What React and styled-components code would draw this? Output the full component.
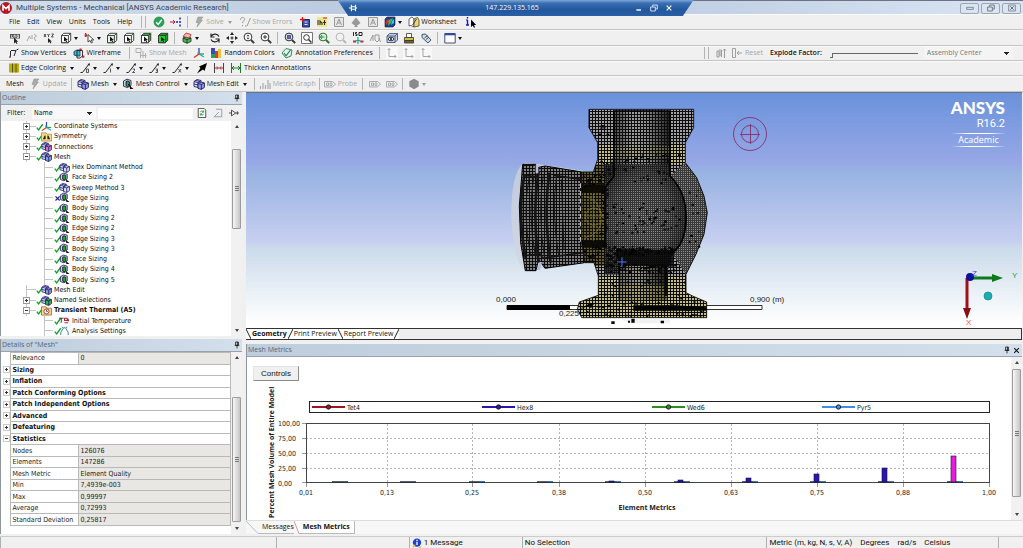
import React, { useState } from 'react';
import styled, { createGlobalStyle, css } from 'styled-components';

const uiFont = '"Open Sans", "Noto Sans", sans-serif';
const titleFont = '"Roboto", "Open Sans", sans-serif';
const treeFont = '"DejaVu Sans Condensed", "Roboto", sans-serif';

const GlobalStyle = createGlobalStyle`
  * {
    box-sizing: border-box;
  }

  body {
    margin: 0;
    overflow: hidden;
    background: #f0f0f0;
    color: #111;
    font: 7px/10px ${uiFont};
  }

  button,
  input,
  select {
    margin: 0;
    padding: 0;
    border: 0;
    background: none;
    color: inherit;
    font: inherit;
  }

  svg {
    display: block;
    flex: none;
  }
`;

/* ---------- icons ---------- */

const meshCubes = (fill) => (
  <g strokeWidth=".9">
    <path d="M1 3.5 4 1.5l4 1v5L5 9.5l-4-1z" fill="#dfe2ff" stroke="#23236e" />
    <path d="m1 3.5 4 1 3-2M5 4.5v5M1 6l4 1 3-2M3 2.5l4 1" stroke="#23236e" fill="none" />
    <path d="M5 5.5 8 4l3.4 1v4.4L8.4 11.4 5 10.4z" fill={fill} stroke="#20205e" />
    <path d="m5 5.5 3.4 1L11.4 5M8.4 6.5v4.9" stroke="#20205e" fill="none" />
  </g>
);

const sizingCube = (
  <g strokeWidth=".9">
    <path d="M1.5 3 5 1.2l4 1.3v5L5.4 9.6l-3.900-1.400z" fill="#cfd0f6" stroke="#20205e" />
    <path d="M4 3.6 5.600 3l1.800.8v3.700l-1.800 1-1.600-.8z" fill="#1fae2c" stroke="#111" />
    <path d="m7.500 7.500 4 3.500H8z" fill="#111" />
  </g>
);

const selectCube = (fill, front, pressed) => (
  <g>
    {pressed && <path d="M0 0h12v12H0z" fill="#fff" stroke="#999" strokeWidth=".5" />}
    <path d="M1.5 3.5 3.8 1.3h6.9v7l-2.300 2.400H1.500z" fill={fill} stroke="#333" strokeWidth=".9" />
    <path d="M1.500 3.500h6.900v7.200H1.500z" fill={front} stroke="#333" strokeWidth=".9" />
    <path d="m8.400 3.500 2.300-2.200" stroke="#333" strokeWidth=".9" />
    <path d="M4 4.500v5l1.300-1.100.9 1.800.9-.5-.8-1.700h1.600z" fill="#111" />
  </g>
);

const magnifier = (inner, line = '#333', glass = '#fff') => (
  <g>
    <circle cx="5" cy="5" r="3.9" fill={glass} stroke={line} />
    <path d="m8 8 3.200 3.200" stroke={line} strokeWidth="1.8" />
    {inner}
  </g>
);

const slash = (mark) => (
  <g>
    <path d="M.5 10.500h2L9 2" stroke="#222" fill="none" />
    <path d="m7.500 2 2.500-.8L9.500 4z" fill="#222" />
    <path d={mark} stroke="#333" strokeWidth=".8" fill="none" />
  </g>
);

const glyphs = {
  logo: (
    <g>
      <circle cx="6" cy="6" r="5.6" fill="#c4141c" stroke="#7c0c10" strokeWidth=".6" />
      <path d="M3 8.800V3.600l3 3 3-3v5.200" stroke="#fff" strokeWidth="1.6" fill="none" />
    </g>
  ),
  check: (
    <g>
      <circle cx="6" cy="6" r="5" fill="#2aa35a" stroke="#13733a" strokeWidth=".6" />
      <path d="m3.200 6.200 2 2.200 3.600-4.600" stroke="#fff" strokeWidth="1.5" fill="none" />
    </g>
  ),
  link: (
    <g>
      <path d="M0 6h4M3 4.200 5 6 3 7.800" stroke="#c0142a" fill="none" />
      <path d="M7 5v2M10 1.500v2M10 5v2M10 8.500v2" stroke="#2233cc" strokeWidth="1.600" />
    </g>
  ),
  bolt: <path d="M5 1h5L7.500 4h2L4 11l1.300-4.500H3z" fill="#aaa" stroke="#8d8d8d" strokeWidth=".5" />,
  help: <path d="M1.500 3.800c0-3 4-3 4-.4C5.500 5 3.500 5 3.500 7M3.500 9v1.300M6 10l1.500 0M8 10l3.500-8" stroke="#999" fill="none" />,
  addBlue: (
    <g>
      <path d="M3.500 3.500h7v7.500h-7z" fill="#3a4fa8" stroke="#1c2a66" />
      <path d="M1 3.500h5M3.500 1v5" stroke="#c81e1e" strokeWidth="1.300" />
      <path d="M5.500 6h3M5.500 8.500h3" stroke="#dfe6ff" />
    </g>
  ),
  addYellow: (
    <g>
      <path d="M1 1h10v10H1z" fill="#f2e68a" />
      <path d="M2 9V4M4 9V5l2 2v2M8.500 4v5M7 6.500h3" stroke="#333" fill="none" strokeWidth="1.100" />
      <path d="M7 2h4" stroke="#c22" />
    </g>
  ),
  pageGray: (
    <g stroke="#999" fill="none">
      <path d="M1.500 1.500h9v9h-9z" fill="#e8e8e8" />
      <path d="m3.500 9 2.500-6 2.500 6M4.500 7h3" />
    </g>
  ),
  spade: <path d="M6 1.500 10.500 7 8 9H6.800L8 11H4l1.200-2H4L1.500 7z" fill="#999" />,
  palette: (
    <g>
      <path d="M1 3 3 1h8v8l-2 2H1z" fill="#1b3e9e" stroke="#222" strokeWidth=".6" />
      <path d="M2 9V5l3-2v3z" fill="#e03030" />
      <path d="M4 10 5 4l4-2-2 5z" fill="#35c247" />
      <path d="m7 9 1-4 2-2v4z" fill="#38c9e8" />
    </g>
  ),
  worksheet: (
    <g strokeWidth=".8">
      <path d="M1 3 4 1l2 2v8L3 9.500 1 10z" fill="#fff" stroke="#444" />
      <path d="M6 3 9.500 1.500 11 4v6L6 11z" fill="#e9d86b" stroke="#444" />
      <path d="m4.500 9 4-6" stroke="#222" />
    </g>
  ),
  infoCursor: (
    <g>
      <path d="M2.500 1v1.500M2.500 4v5M1 9h3M1.300 4h1.200" stroke="#1515d0" strokeWidth="1.400" />
      <path d="M6 3.500v7.500l1.800-1.500 1.200 2.300 1-.6-1-2.200h2.200z" fill="#000" />
    </g>
  ),
  labelA: (
    <g>
      <path d="M1 2h10v4.500H1z" fill="#555" />
      <path d="M2.500 3.200v2.300h1.500M5 5.500V3.200h1.200v2.300M8 3.200h1.500v2.300H8z" stroke="#fff" strokeWidth=".7" fill="none" />
      <path d="M5 5.500v6l1.500-1.300 1 1.800 1-.5-1-1.800h1.700z" fill="#222" />
    </g>
  ),
  probeGray: <path d="m1 9 2.500-5 1 3M6 3v4M8 2l2.500 2L8 6l2 3" stroke="#a8a8a8" fill="none" />,
  coords: (
    <g stroke="#222" fill="none">
      <path d="m1 2 2 3M3 2 1 5M4.500 2l1 1.500L6.500 2M5.500 3.500V5M8.500 2h2l-2 3h2" strokeWidth=".8" />
      <path d="M5 6v5l1.400-1.200 1 1.800 1-.5-1-1.700h1.500z" fill="#222" stroke="none" />
    </g>
  ),
  pick: (
    <g>
      <path d="M1.500 1 3 4 1 4.500z" fill="#c22" stroke="#c22" />
      <path d="M4 2.500v7.500l2-1.600 1.300 2.600 1.200-.6-1.200-2.500h2.500z" fill="#fff" stroke="#333" strokeWidth=".9" />
    </g>
  ),
  selBody: selectCube('#fff', '#fff'),
  selVertex: selectCube('#dff3df', '#e3f6e3'),
  selEdge: selectCube('#e8f6e8', '#fff'),
  selFace: selectCube('#24b534', '#fff', true),
  selSolid: selectCube('#0d9a20', '#1fd636'),
  viewCube: (
    <g strokeWidth=".8">
      <path d="M2 6 6 4.500 10 6v3.500L6 11.300 2 9.500z" fill="#45c04f" stroke="#222" />
      <path d="M2 4.500 5 1l5 1.500L8.500 6z" fill="#f4b9b9" stroke="#a22" />
      <path d="m2 6 4 1.700L10 6M6 7.700v3.600" stroke="#222" fill="none" />
    </g>
  ),
  rotate: <path d="M10 4.500C8.500 1.500 4 1.500 2.500 4M2 1.500V5h3.500M2 7.500c1.500 3 6 3 7.500.5M10 10.500V7H6.500" stroke="#222" strokeWidth="1.200" fill="none" />,
  pan: <path d="M6 0 8 3H4zM6 12 4 9h4zM0 6l3-2v4zM12 6 9 8V4zM5.500 4.500h1v1h1v1h-1v1h-1v-1h-1v-1h1z" fill="#222" />,
  zoom: magnifier(<path d="M5 2.500 6.500 4.300h-3zM5 7.500 3.500 5.700h3z" fill="#333" />),
  zoomIn: magnifier(<path d="M3 5h4M5 3v4" stroke="#333" />),
  zoomFit: magnifier(<path d="M3.500 3.500h3v3h-3z" fill="#5a6ac0" stroke="#222" strokeWidth=".6" />, '#333', '#d8dcf8'),
  zoomBox: (
    <g>
      <path d="M.5.500h11v11H.5z" fill="#fff" stroke="#777" />
      <circle cx="5.500" cy="5.500" r="2.800" fill="none" stroke="#333" />
      <path d="m7.500 7.500 3 3" stroke="#333" strokeWidth="1.500" />
    </g>
  ),
  zoomPrev: magnifier(<path d="M2.500 5h4M4 3 2.500 5 4 7" stroke="#1a8a2a" fill="none" />, '#2b6b34', '#e0f4e0'),
  zoomNextGray: magnifier(null, '#b5b5b5', '#f3f3f3'),
  iso: (
    <g>
      <path d="M1.500 0v4M5 .5H3.500V2H5v1.500H3.500M7 .5h3v3H7z" stroke="#111" strokeWidth=".9" fill="none" />
      <path d="M6 5v3M2 10l4-2 4 2M6 8v4" stroke="#1da0a0" strokeWidth="1.200" fill="none" />
      <path d="M1 8.500h3v2H1zM8.500 8.500h3v2h-3z" fill="#c33" />
    </g>
  ),
  lookGray: <path d="m1 9 3-6v6M6 3h4v5L8 10 6 8zM10 6l1.500 4" stroke="#999" fill="none" />,
  eyeBox: (
    <g strokeWidth=".8">
      <path d="M1 4 3.500 1.500h8V8L9 10.500H1z" fill="#c7d3ea" stroke="#33456b" />
      <path d="M1 4h8v6.500M9 4l2.500-2.500" stroke="#33456b" fill="none" />
      <ellipse cx="5" cy="7" rx="2.800" ry="1.700" fill="#fff" stroke="#111" />
      <circle cx="5" cy="7" r="1" fill="#111" />
    </g>
  ),
  printer: (
    <g strokeWidth=".8">
      <path d="M3.500 1.500h5v4h-5z" fill="#fff" stroke="#333" />
      <path d="M1.500 5.500h9v3h-9z" fill="#cfc040" stroke="#333" />
      <path d="M1.500 8.500h9V11h-9z" fill="#6a6a2a" stroke="#333" />
    </g>
  ),
  tag: (
    <g strokeWidth=".9">
      <path d="M2 2.500 5.500 2l5.500 6-3 3-6-5.500z" fill="#c9dbe8" stroke="#345" />
      <path d="m4.500 6 3-2.500M6 7.500 9 5" stroke="#345" />
    </g>
  ),
  windowPane: (
    <g>
      <path d="M.8 1.500h10.400v9.500H.8z" fill="#fff" stroke="#3c4c80" />
      <path d="M.8 2.500h10.400" stroke="#2c4ca8" strokeWidth="1.600" />
    </g>
  ),
  vertices: <path d="M1 10h2M2.500 9.500V4M3 3.500h5L6 9M8.500 3l2-1" stroke="#222" fill="none" />,
  wireframe: (
    <g>
      <path d="M1 4.500 4 3h3v6H4L1 8z" fill="#3cb7c9" stroke="#135" strokeWidth=".8" />
      <path d="M6.500 1.500h2.300v2.300H6.500zM9 8.500h2.300v2.300H9z" fill="#c22c2c" />
      <path d="M4 3.500h5.500V9L7 11H4z" fill="none" stroke="#222" strokeWidth=".9" />
    </g>
  ),
  showMeshGray: <path d="M1 1.500h5v4H1zM5.500 6v5M8 4v7M10.500 6v5M5 8.500h6.500" stroke="#b0b0b0" fill="none" />,
  triad: (
    <g strokeWidth="1.300" fill="none">
      <path d="M6 7V1" stroke="#2a3ad0" />
      <path d="m6 7 5 3M4.500 5.500 6 7" stroke="#20b0c0" />
      <path d="m6 7-5 3.500" stroke="#d03030" />
      <path d="M6 7h5" stroke="#28a838" />
    </g>
  ),
  colors: (
    <g>
      <path d="M1 1h4v10H1z" fill="#3a48b8" />
      <path d="M5 4h3v7H5z" fill="#d83a3a" />
      <path d="M8 2h3v9H8z" fill="#e8c23a" />
      <path d="M1 7h4v4H1z" fill="#27a05a" />
    </g>
  ),
  annotate: (
    <g fill="none">
      <path d="m1 6 4-4.500L11 3l-1 6-5 2z" fill="#e2f2ea" stroke="#2d7a5a" strokeWidth=".9" />
      <path d="m3 6 2 2.800L9.500 3" stroke="#178a48" strokeWidth="1.200" />
    </g>
  ),
  axisGray: (
    <g>
      <path d="M0 0h12v12H0z" fill="#f8f8f8" />
      <path d="M3 1.500v8h7M8.500 8l1.500 1.500L8.500 11M1.500 3 3 1.500 4.500 3" stroke="#a5a5a5" fill="none" />
    </g>
  ),
  explodeGray: <path d="M2 4h2v6H2zM5 2v7M6.500 3v7M9.500 2v9M8 3.500 9.500 2 11 3.500" stroke="#999" fill="none" />,
  resetGray: <path d="M1.500 1.500h3v9h-3zM11 6H6M8 4 6 6l2 2" stroke="#a0a0a0" fill="none" />,
  edgeColor: (
    <g>
      <path d="M1 1.500h10v9H1z" fill="#b9ad16" />
      <path d="M4.500 1.500v9M8 1.500v9" stroke="#5d560a" />
    </g>
  ),
  edge0: slash('M6.500 7h2v3.500h-2z'),
  edge1: slash('M7.500 6.500v4'),
  edge2: slash('M6.500 7h2v1.500l-2 2h2.500'),
  edge3: slash('M6.500 7h2v3.500h-2M7 8.700h1.500'),
  edgeX: slash('m6.500 7 2.500 3.500M9 7l-2.500 3.500'),
  arrowBlack: <path d="M1 11.500 4.500 6 3 4.500 11 1 8.500 9 7 7.500z" fill="#000" />,
  thickRed: (
    <g fill="none">
      <path d="M1.500 1v10M10.500 1v10" stroke="#444" />
      <path d="M2 6h3M10 6H7M4 4.500 5.500 6 4 7.500M8 4.500 6.500 6 8 7.500" stroke="#b02222" />
    </g>
  ),
  thickGreen: <path d="M1.500 1v10M10.500 1v10M2 6h8M4 4 2 6l2 2M8 4l2 2-2 2" stroke="#1f7a2c" fill="none" />,
  mesh: meshCubes('#8f9be8'),
  meshPale: meshCubes('#dfe3ff'),
  meshPink: meshCubes('#d67ad6'),
  meshGreen: meshCubes('#32b944'),
  sizing: sizingCube,
  meshControl: (
    <g>
      {sizingCube}
      <path d="m6 6 3 3" stroke="#111" />
    </g>
  ),
  graphGray: <path d="M1.500 11V8M4 11V5M6.500 11V7M9 11V2M11 11V5" stroke="#aaa" strokeWidth="1.200" />,
  badgeGray: <path d="M.5 3.500h8l3 2.500-3 3h-8zM2.500 5h2v2.500h-2zM6 5h2v2.500H6z" stroke="#ababab" fill="none" />,
  sphereGray: <path d="m6 .8 4.700 2.500v5.200L6 11.200 1.300 8.500V3.300z" fill="#8b8b8b" />,
  symmetry: (
    <g>
      <path d="M.5 2h5l1 1.500h5V11H.5z" fill="#f6dc8a" stroke="#a58124" strokeWidth=".8" />
      <path d="m2 9 2-4h1v4zM10 9 8 5H7v4z" fill="#222" />
    </g>
  ),
  thermal: (
    <g>
      <path d="M.5 2h5l1 1.500h5V11H.5z" fill="#f6dc8a" stroke="#8a5a20" strokeWidth=".8" />
      <circle cx="6" cy="7" r="2.800" fill="#fff" stroke="#a03030" />
      <path d="M6 5v2h1.500" stroke="#222" strokeWidth=".8" fill="none" />
    </g>
  ),
  initTemp: (
    <g>
      <path d="M0 3.500h5M2.500 3.500v5" stroke="#333" fill="none" />
      <path d="M6 3.500h3v2.500H6zM6 8.500h4M10 4v3M11 6h-3" stroke="#b02848" fill="none" strokeWidth="1.200" />
    </g>
  ),
  settings: <path d="M2 11V8l3-5h2l3 5v3M3 2l1.500 1M9 2 7.500 3" stroke="#2a7c98" fill="none" />,
  refresh: (
    <g>
      <path d="M1.500.500h7l2 2v9h-9z" fill="#fff" stroke="#333" />
      <path d="M4 5c.5-2 3-2 4 0M8 2.800V5H6M8 7c-.5 2-3 2-4 0M4 9.200V7h2" stroke="#1d9a2c" fill="none" />
    </g>
  ),
  filterGray: <path d="M3.500 1.500h7v9h-9M1 11l6-6" stroke="#8a8fa8" fill="none" />,
  expand: <path d="M0 6h3M3 2.500v7L8 6zM8 6h4M10 4v4" stroke="#333" fill="none" />,
  pin: <path d="M4 1.500h4v5H4zM7 1.500v5M2.500 6.500h7M6 6.500V11" stroke="#111" strokeWidth="1.200" fill="none" />,
  close: <path d="m2 2 8 8M10 2l-8 8" stroke="#111" strokeWidth="1.800" />,
  pinSide: <path d="M1 6h3M4 2v8M4 4.500h5v3H4M9 2v8M9 6h2" stroke="#fff" strokeWidth="1.300" fill="none" />,
  minimize: <path d="M2 9h7" stroke="currentColor" strokeWidth="2" />,
  minBox: <path d="M1 5h10v3H1z" stroke="currentColor" fill="none" />,
  restore: <path d="M4 4V1.500h7v6H8.500M1 4.500h7v6H1z" stroke="currentColor" strokeWidth="1.200" fill="none" />,
  closeLight: <path d="m2.500 2.500 7 7M9.500 2.500l-7 7" stroke="currentColor" strokeWidth="1.800" />,
  closeBox: (
    <g fill="none" stroke="currentColor">
      <path d="M1 1.500h10v9H1z" />
      <path d="m3.500 3.500 5 5M8.500 3.500l-5 5" strokeWidth="1.400" />
    </g>
  ),
  info: (
    <g>
      <circle cx="6" cy="5.500" r="5" fill="#1c3fd0" />
      <path d="M6 2v1.500M6 4.500v4" stroke="#fff" strokeWidth="1.600" />
      <path d="m1 11 3-3M8 11h3" stroke="#e0b020" strokeWidth="1.500" />
    </g>
  ),
  done: <path d="m1 7.500 2.500 3L9 3" stroke="#12a022" strokeWidth="1.700" fill="none" />,
  failed: <path d="m2 4.500 5.500 5.500M7.500 4.500 2 10" stroke="#1a2090" strokeWidth="1.500" />,
};

const Icon = ({ name, size = 12 }) => (
  <svg width={size} height={size} viewBox="0 0 12 12" aria-hidden="true">{glyphs[name]}</svg>
);

/* ---------- shell ---------- */

const Shell = styled.div`
  position: relative;
  display: flex;
  flex-direction: column;
  height: 100vh;
`;

const TitleBar = styled.header`
  display: flex;
  align-items: center;
  height: 14px;
  padding: 1px 2px 0 0;
  gap: 4px;
  border-top: 1px solid #6c7482;
  background: linear-gradient(90deg, #d3dfec, #bccbe0 32%, #c3d1e6 70%, #d9e5f3);
  color: #3c4656;
`;

const AppTitle = styled.h1`
  flex: 1;
  margin: 0;
  font: 400 8px/10px ${titleFont};
`;

const WindowButton = styled.button`
  display: grid;
  place-items: center;
  width: 19px;
  height: 11px;
  margin-left: -2px;
  border: 1px solid #9aa7b8;
  border-radius: 2px;
  background: #dbe5f0;
  color: #59616d;
`;

const RemoteBar = styled.div`
  position: absolute;
  top: 0;
  left: 33%;
  display: flex;
  align-items: center;
  gap: 16px;
  width: 356px;
  height: 16px;
  padding: 0 19px 0 10px;
  background: linear-gradient(#7ea6d4, #3a6fb4 20%, #24579c 60%, #2a5fa6);
  clip-path: polygon(0 0, 100% 0, 97% 100%, 3% 100%);
  color: #f4f8ff;
`;

const RemoteAddress = styled.span`
  flex: 1;
  padding-left: 28px;
  text-align: center;
`;

const RemoteButton = styled.button`
  width: 10px;
  height: 10px;
  margin-right: -11px;

  &:first-child {
    width: 14px;
    margin: 0;
  }

  &:last-child {
    margin: 0;
  }
`;

const Toolbar = styled.div`
  display: flex;
  align-items: center;
  height: ${({ $tall }) => ($tall ? 16 : 15)}px;
  padding-left: ${({ $inset }) => $inset || 6}px;
  border-bottom: 1px solid #c4c4c4;
  box-shadow: inset 0 1px #fafafa;
  white-space: nowrap;
`;

const ToolButton = styled.button`
  display: flex;
  align-items: center;
  height: 13px;
  padding-right: ${({ $end }) => $end || 0}px;
  color: ${({ disabled }) => (disabled ? '#a6a6a6' : '#111')};
`;

const IconSlot = styled.span`
  display: grid;
  place-items: center;
  width: ${({ $narrow }) => ($narrow ? 15 : 17)}px;
`;

const Caret = styled.span`
  width: 0;
  height: 0;
  margin: 1px ${({ $tight }) => ($tight ? 2 : 4)}px 0 ${({ $gap }) => $gap || 0}px;
  border: 2px solid transparent;
  border-top: 3px solid ${({ $muted }) => ($muted ? '#999' : '#111')};
  border-bottom: 0;
`;

const MenuButton = styled.button`
  padding: 0 3px 0 4px;
`;

const Divider = styled.span`
  width: 1px;
  height: 12px;
  margin: 0 ${({ $space }) => $space || 4}px;
  background: #b4b4b4;
`;

const Grip = styled.span`
  width: 5px;
  height: 12px;
  margin: 0 4px 0 ${({ $before }) => $before || 0}px;
  border: solid #b4b4b4;
  border-width: 0 1px;
`;

const Spacer = styled.span`
  flex: 1;
`;

const Explode = styled.div`
  display: flex;
  align-items: center;
  width: 319px;
`;

const ExplodeLabel = styled.label`
  margin: 0 8px 0 7px;
  font-weight: 600;
`;

const ExplodeRange = styled.input`
  width: 88px;
  height: 12px;
  appearance: none;

  &::-webkit-slider-runnable-track {
    height: 1px;
    background: #666;
  }

  &::-webkit-slider-thumb {
    width: 3px;
    height: 5px;
    border: solid #666;
    border-width: 0 1px 1px 0;
    background: #f0f0f0;
    appearance: none;
  }
`;

const arrowSelect = css`
  appearance: none;
  background-image: linear-gradient(#222, #222), linear-gradient(#222, #222), linear-gradient(#222, #222);
  background-position: right 4px top 5px, right 5px top 6px, right 6px top 7px;
  background-repeat: no-repeat;
  background-size: 5px 1px, 3px 1px, 1px 1px;
`;

const AssemblySelect = styled.select`
  ${arrowSelect}
  flex: 1;
  height: 12px;
  margin: 0 10px 0 6px;
  padding: 0 3px;
  background-color: #f4f4f4;
  color: #777;
`;

/* ---------- panels ---------- */

const Main = styled.main`
  display: flex;
  flex: 1;
  gap: 4px;
  min-height: 0;
  padding-right: 1px;
`;

const SideColumn = styled.div`
  display: flex;
  flex: none;
  flex-direction: column;
  gap: 3px;
  width: 242px;
`;

const WorkColumn = styled.div`
  display: flex;
  flex: 1;
  flex-direction: column;
  min-width: 0;
`;

const Panel = styled.section`
  display: flex;
  flex: ${({ $grow }) => ($grow ? '1 1 0' : 'none')};
  flex-direction: column;
  min-height: 0;
  border: solid #8f959c;
  border-width: 0 0 0 1px;
  background: #fff;
`;

const PanelHeader = styled.div`
  display: flex;
  align-items: center;
  gap: 2px;
  height: 13px;
  padding: 0 1px;
  border-bottom: 1px solid #98a2ae;
  background: linear-gradient(90deg, #becddc, #d3dfeb);
`;

const PanelTitle = styled.h2`
  flex: 1;
  margin: 0;
  color: #54657c;
  font-size: 7px;
  font-weight: 400;
`;

const PanelButton = styled.button`
  width: 8px;
  height: 8px;
`;

const PanelBody = styled.div`
  display: flex;
  flex: 1;
  min-height: 0;
`;

const FilterRow = styled.div`
  display: flex;
  align-items: center;
  height: 16px;
  padding-left: 2px;
  border-left: 2px solid #f0f0f0;
  background: #f0f0f0;
`;

const FilterLabel = styled.label`
  width: 27px;
  padding-left: 2px;
`;

const FilterSelect = styled.select`
  ${arrowSelect}
  width: 64px;
  height: 12px;
  padding-left: 2px;
  background-color: #f8f8f8;
  font: 7px/12px ${treeFont};
`;

const FilterInput = styled.input`
  flex: 1;
  min-width: 0;
  height: 11px;
  margin: 0 1px 0 2px;
  background: #fff;
`;

const FilterButton = styled.button`
  display: grid;
  place-items: center;
  width: 16px;
`;

const ScrollBar = styled.div`
  display: flex;
  flex: none;
  flex-direction: column;
  align-items: stretch;
  width: 11px;
  background: #f1f1f1;
`;

const ScrollArrow = styled.button`
  display: grid;
  place-items: center;
  height: 11px;

  &::after {
    content: '';
    border: 2px solid transparent;
    ${({ $down }) => ($down ? 'border-top: 3px solid #444; border-bottom: 0;' : 'border-bottom: 3px solid #444; border-top: 0;')}
  }
`;

const ScrollGap = styled.span`
  flex: ${({ $share }) => $share} 0 0;
`;

const ScrollThumb = styled.div`
  display: grid;
  flex: ${({ $share }) => $share} 0 0;
  place-items: center;
  margin: 0 1px;
  border: 1px solid #9b9b9b;
  border-radius: 1px;
  background: linear-gradient(90deg, #f7f7f7, #dedede 50%, #c6c6c6);

  &::after {
    content: '';
    width: 4px;
    height: 5px;
    background: repeating-linear-gradient(#777 0 1px, transparent 1px 2px);
  }
`;

const Scroll = ({ before, thumb, after }) => (
  <ScrollBar>
    <ScrollArrow aria-label="Scroll up" />
    <ScrollGap $share={before} />
    <ScrollThumb $share={thumb} />
    <ScrollGap $share={after} />
    <ScrollArrow $down aria-label="Scroll down" />
  </ScrollBar>
);

/* ---------- outline tree ---------- */

const Tree = styled.ul`
  display: grid;
  flex: 1;
  grid-auto-rows: 1fr;
  margin: 0;
  padding: 0;
  overflow: hidden;
  font: 7px/10px ${treeFont};
  list-style: none;
`;

const TreeItem = styled.li`
  display: flex;
  align-items: center;
  min-height: 0;
  padding-left: ${({ $level }) => ($level ? 43 : 25)}px;
  background: ${({ $level }) => ($level
    ? 'linear-gradient(#c4c4c4, #c4c4c4) 43px 0 / 1px 100% no-repeat, linear-gradient(#c4c4c4, #c4c4c4) 43px 50% / 9px 1px no-repeat'
    : 'linear-gradient(#c4c4c4, #c4c4c4) 25px 0 / 1px 100% no-repeat, linear-gradient(#c4c4c4, #c4c4c4) 25px 50% / 10px 1px no-repeat')};
  font-weight: ${({ $bold }) => ($bold ? 700 : 400)};
  white-space: nowrap;
`;

const Toggle = styled.button`
  flex: none;
  width: 5px;
  height: 5px;
  margin: 0 7px 0 -2px;
  background: linear-gradient(#333, #333) center / 3px 1px no-repeat,
    ${({ $open }) => ($open ? '' : 'linear-gradient(#333, #333) center / 1px 3px no-repeat,')}
    linear-gradient(#fff, #fff);
  outline: 1px solid #9a9a9a;
`;

const ToggleGap = styled.span`
  width: 10px;
`;

const TreeIcons = styled.span`
  display: flex;
  align-items: center;
  margin-right: 2px;

  svg + svg {
    margin-left: -4px;
  }
`;

const outline = [
  { label: 'Coordinate Systems', icon: 'triad', open: false },
  { label: 'Symmetry', icon: 'symmetry', open: false },
  { label: 'Connections', icon: 'meshPink', open: false },
  { label: 'Mesh', icon: 'mesh', open: true },
  { label: 'Hex Dominant Method', icon: 'meshPale', level: 1 },
  { label: 'Face Sizing 2', icon: 'sizing', level: 1 },
  { label: 'Sweep Method 3', icon: 'meshPale', level: 1 },
  { label: 'Edge Sizing', icon: 'sizing', level: 1, status: 'failed' },
  { label: 'Body Sizing', icon: 'sizing', level: 1 },
  { label: 'Body Sizing 2', icon: 'sizing', level: 1 },
  { label: 'Edge Sizing 2', icon: 'sizing', level: 1 },
  { label: 'Edge Sizing 3', icon: 'sizing', level: 1 },
  { label: 'Body Sizing 3', icon: 'sizing', level: 1 },
  { label: 'Face Sizing', icon: 'sizing', level: 1 },
  { label: 'Body Sizing 4', icon: 'sizing', level: 1 },
  { label: 'Body Sizing 5', icon: 'sizing', level: 1 },
  { label: 'Mesh Edit', icon: 'mesh' },
  { label: 'Named Selections', icon: 'meshGreen', open: false },
  { label: 'Transient Thermal (A5)', icon: 'thermal', open: true, bold: true },
  { label: 'Initial Temperature', icon: 'initTemp', level: 1 },
  { label: 'Analysis Settings', icon: 'settings', level: 1 },
];

/* ---------- details ---------- */

const DetailsPanel = styled(Panel)`
  height: 195px;
`;

const DetailsTable = styled.table`
  flex: 1;
  height: 174px;
  border-collapse: collapse;
  font: 7px/8px ${treeFont};
  table-layout: fixed;
`;

const DetailsCell = styled.td`
  padding: 0 2px;
  border: 1px solid #b9b9b9;
  background: ${({ $filled }) => ($filled ? '#e8e7e3' : '#fff')};
  color: #222;
`;

const GroupCell = styled.th`
  padding: 0 2px;
  border: 1px solid #b9b9b9;
  font-weight: 700;
  text-align: left;
`;

const GutterCell = styled.td`
  padding: 0 0 0 3px;

  ${Toggle} {
    display: block;
    margin: 0;
    outline-color: #ccc;
  }
`;

const details = [
  { name: 'Relevance', value: '0' },
  { group: 'Sizing' },
  { group: 'Inflation' },
  { group: 'Patch Conforming Options' },
  { group: 'Patch Independent Options' },
  { group: 'Advanced' },
  { group: 'Defeaturing' },
  { group: 'Statistics', open: true },
  { name: 'Nodes', value: '126076' },
  { name: 'Elements', value: '147286' },
  { name: 'Mesh Metric', value: 'Element Quality' },
  { name: 'Min', value: '7,4939e-003' },
  { name: 'Max', value: '0,99997' },
  { name: 'Average', value: '0,72993' },
  { name: 'Standard Deviation', value: '0,25817' },
];

/* ---------- viewport ---------- */

const Viewport = styled.section`
  position: relative;
  display: flex;
  flex: 1;
  justify-content: center;
  align-items: flex-end;
  min-height: 0;
  border-top: 1px solid #6d7480;
  background: linear-gradient(#6a92dc, #98a8e6 30%, #97b2e2 33%, #c6cff0 63%, #cbdbea 66%, #fff 98%);
`;

const Brand = styled.div`
  position: absolute;
  top: 5px;
  right: 17px;
  display: flex;
  flex-direction: column;
  align-items: flex-end;
  color: #fff;
  font-size: 11px;
  line-height: 12px;
`;

const BrandName = styled.strong`
  font: 900 17px/20px "Lato", ${uiFont};
`;

const BrandRelease = styled.span`
  font: 11px/12px ${titleFont};
`;

const BrandEdition = styled.span`
  width: 53px;
  margin-top: 3px;
  border: solid transparent;
  border-width: 1px 0;
  border-image: linear-gradient(90deg, transparent, #fff 30%, #fff 70%, transparent) 1;
  font-size: 9px;
  text-align: center;
`;

const Target = styled.svg`
  position: absolute;
  top: 23px;
  right: 254px;
`;

const Triad = styled.svg`
  position: absolute;
  right: 0;
  bottom: 0;
`;

// repeatable scatter for the stray element specks
const scatter = (count, x, y, w, h, seed) => {
  let s = seed * 7919;
  const next = () => {
    s = (s * 16807) % 2147483647;
    return s / 2147483647;
  };
  return Array.from({ length: count }, () => [x + next() * w, y + next() * h, 3 + next() * 6, 3 + next() * 4]);
};

const specks = [
  ...scatter(26, 328, 170, 250, 30, 11),
  ...scatter(20, 350, 210, 190, 50, 23),
  ...scatter(56, 365, 320, 200, 90, 37),
  ...scatter(50, 345, 450, 40, 60, 41),
  ...scatter(90, 375, 450, 175, 26, 53),
  ...scatter(50, 355, 500, 210, 28, 59),
  ...scatter(20, 335, 545, 250, 60, 67),
  ...scatter(50, 275, 615, 365, 45, 71),
  ...scatter(12, 595, 250, 30, 220, 83),
  ...scatter(36, 330, 195, 20, 260, 97),
  ...scatter(26, 278, 232, 55, 40, 101),
  ...scatter(26, 278, 450, 50, 45, 103),
  ...scatter(8, 325, 85, 25, 30, 107),
];

const outerBody = 'M297 40H611V95L586 140V200L620 245L642 300L652 350L642 415L618 475L588 535V590L612 602L650 618V665H275L262 640L268 618L325 598V540L312 500H285L275 440V228H310L323 190V140L297 95Z';
const sideBody = 'M98 205H137V216L165 210L275 228L284 500L165 517L146 490L138 524H106L92 440L88 330Z';
const rightShell = 'M586 200L655 250V480L588 535L545 470L585 400L590 340L540 240Z';
const ballShape = 'M345 205H540V240Q590 290 590 365T545 480L530 535H345Z';

const ModelSvg = styled.svg`
  overflow: visible;
`;

const Model = () => (
  <ModelSvg width="290" height="235" viewBox="0 0 290 235" role="img" aria-label="Valve mesh">
    <defs>
      <pattern id="coarse" width="9" height="9" patternUnits="userSpaceOnUse">
        <path d="M0 0H9V3H3V9H0Z" fill="#0c0c0c" />
      </pattern>
      <pattern id="fine" width="6" height="6" patternUnits="userSpaceOnUse">
        <path d="M0 0H6V3H3V6H0Z" fill="#000" opacity=".62" />
      </pattern>
      <linearGradient id="bore">
        <stop offset="0" stopColor="#4a4a4a" />
        <stop offset=".35" stopColor="#a2a2a2" />
        <stop offset=".6" stopColor="#8a8a8a" />
        <stop offset="1" stopColor="#222" />
      </linearGradient>
      <radialGradient id="ball" cx=".45" cy=".5" r=".6">
        <stop offset="0" stopColor="#9c9c9c" />
        <stop offset=".6" stopColor="#7c7c7c" />
        <stop offset="1" stopColor="#383838" />
      </radialGradient>
      <linearGradient id="neck">
        <stop offset="0" stopColor="#6a6a62" />
        <stop offset=".4" stopColor="#98988c" />
        <stop offset="1" stopColor="#1e1e1a" />
      </linearGradient>
      <clipPath id="bodyClip"><path d={outerBody} /></clipPath>
    </defs>

    <g fontFamily="Liberation Sans, sans-serif" fontSize="8" fill="#222">
      <text x="7" y="209">0,000</text>
      <text x="70" y="223">0,225</text>
      <text x="261" y="209">0,900 (m)</text>
    </g>
    <path d="M18 212.500h255v4H18z" fill="#fff" stroke="#333" />
    <path d="M18 212h63v5H18z" fill="#000" />

    <g transform="translate(1 3) scale(.333333)">
      <path d="M110 200C80 200 64 270 64 350S80 510 105 524L280 500V224L150 205Z" fill="#d3d5dc" opacity=".7" />
      <path d={sideBody} fill="#808080" />
      <path d={sideBody} fill="url(#coarse)" stroke="#000" strokeWidth="3" />
      <g fill="none" stroke="#151515">
        <path d="M104 235Q80 350 108 490M146 225Q126 350 146 500M178 230Q160 350 182 500" strokeWidth="8" />
        <path d="M118 240Q96 350 122 480M132 240Q112 350 136 480M160 235Q142 350 164 490M200 235Q184 350 206 480M214 250L222 460" strokeWidth="3" />
        <path d="M98 238L140 242L146 218M190 238L275 250M112 478L150 474L158 486L282 470" strokeWidth="5" />
      </g>
      <path d="M137 206V232H145V214M140 522L150 498H156L150 522Z" fill="#b4bade" />
      <path d="M272 262V440" stroke="#ddd" strokeWidth="3" strokeDasharray="14 9" />

      <path d={outerBody} fill="#a2a2a4" />
      <g clipPath="url(#bodyClip)">
        <path d="M320 148H590V205H320zM262 540H652V668H262z" fill="#c6be84" />
        <path d="M270 205H345V510H270z" fill="#6a602c" />
        <path d={outerBody} fill="url(#coarse)" />
        <path d={rightShell} fill="#929297" />
        <path d={rightShell} fill="url(#fine)" />
        <path d="M275 265H345V290H275zM275 435H345V455H275z" fill="#0c0b05" />
      </g>
      <g fill="none" stroke="#a89838" strokeWidth="2" opacity=".7">
        <path d="M282 360H342M310 295V435" />
        <circle cx="312" cy="362" r="26" />
        <path d="M282 300Q330 310 334 362T284 425" />
      </g>

      <path d="M372 45H540V210H372z" fill="url(#bore)" />
      <path d="M372 150H540V185H372z" fill="#b5ae50" opacity=".35" />
      <path d="M372 45H540V210H372z" fill="url(#coarse)" />
      <path d={ballShape} fill="url(#ball)" />
      <path d={ballShape} fill="url(#fine)" />
      <path d="M372 45V240L345 275V455M540 45V240Q590 290 588 368T545 470M372 45H540" fill="none" stroke="#000" strokeWidth="5" />
      <path d="M378 458L552 462L548 512L388 516Z" fill="#050505" opacity=".82" />
      <path d="M388 510H530V612H388z" fill="url(#neck)" />
      <path d="M388 570H530V625H388z" fill="#b8ac50" opacity=".5" />
      <path d="M388 510H530V625H388z" fill="url(#coarse)" />
      <path d="M388 510V612M528 510V600" stroke="#000" strokeWidth="5" />
      <path d="M430 628H555L650 634V644H430zM268 640L300 622H320M300 660H400" fill="#000" />
      <path d={outerBody} fill="none" stroke="#000" strokeWidth="2.500" />
      <path d="M390 668H540V682H420Z" fill="#eee" opacity=".8" />
      <g fill="#060606">
        {specks.map(([x, y, w, h], i) => <rect key={i} x={x} y={y} width={w} height={h} />)}
        <path d="M364 676h10v8h-10zM512 674h10v8h-10zM414 674h6v6h-6zM424 668h10v12h-10z" />
      </g>
      <path d="M396 484V512M384 498H410" stroke="#4a78f0" strokeWidth="3" />
    </g>
  </ModelSvg>
);

const ViewTabs = styled.div`
  display: flex;
  flex: none;
  height: 12px;
  border: 1px solid #333;
  border-left: 0;
  background: #eee;
`;

const ViewTab = styled.button`
  padding: 0 1px;
  background: #fff;
  color: #111;
  font-weight: ${({ $active }) => ($active ? 700 : 400)};
`;

const Slant = ({ back }) => (
  <svg width="5" height="10" viewBox="0 0 5 10">
    <path d="M0 0h5v10H0z" fill="#fff" />
    <path d={back ? 'M0 0 5 10' : 'M5 0 0 10'} stroke="#222" />
  </svg>
);

/* ---------- metrics ---------- */

const MetricsPanel = styled(Panel)`
  height: 176px;
  margin-top: 4px;
`;

const MetricsContent = styled.div`
  flex: 1;
  min-width: 0;
  padding-top: 9px;
  overflow: hidden;
`;

const ControlsButton = styled.button`
  display: block;
  width: 46px;
  height: 15px;
  margin-left: 6px;
  border: 1px solid #e4e4e4;
  border-right-color: #8c8c8c;
  border-bottom-color: #8c8c8c;
  background: #f0f0f0;
  font: 8px/12px "Liberation Sans", sans-serif;
`;

const ChartSvg = styled.svg`
  width: 100%;
  height: auto;
  overflow: visible;
  font: 7px ${treeFont};
  fill: #222;
`;

const ChartTitle = styled.text`
  font: 700 7px ${uiFont};
`;

const series = [
  { name: 'Tet4', color: '#a01420' },
  { name: 'Hex8', color: '#2a14b4' },
  { name: 'Wed6', color: '#2c9018' },
  { name: 'Pyr5', color: '#3a8ee8' },
];

const xTicks = ['0,01', '0,13', '0,25', '0,38', '0,50', '0,63', '0,75', '0,88', '1,00'];
const tickX = [59, 140, 225, 312, 398, 484, 570, 656, 742];
const yTicks = ['100,00', '75,00', '50,00', '25,00', '0,00'];
const bars = [0, 0, 0, 0, 1, 2, 4, 8, 14, 26];

const Chart = () => (
  <ChartSvg viewBox="0 0 764 138" role="img" aria-label="Mesh Metrics">
    <ChartTitle transform="translate(27 137) rotate(-90)">Percent Mesh Volume of Entire Model</ChartTitle>
    <rect x="62.500" y="20.500" width="680" height="11" fill="#fff" stroke="#222" />
    {series.map(({ name, color }, i) => (
      <g key={name} transform={`translate(${65 + i * 170} 26)`}>
        <path d="M0 0H33" stroke={color} strokeWidth="2" />
        <circle cx="16.500" r="2.200" fill={color} stroke="#111" strokeWidth=".8" />
        <text x="35" y="3">{name}</text>
      </g>
    ))}
    <g stroke="#b5b5b5" strokeDasharray="2 2">
      {[57, 72, 87].map((y) => <path key={y} d={`M59 ${y}.5H742`} />)}
      {tickX.slice(1, -1).map((x) => <path key={x} d={`M${x}.5 43V102`} />)}
    </g>
    <g stroke="#999">
      {[42, 57, 72, 87, 101].map((y) => <path key={y} d={`M55 ${y}.5h4`} />)}
      {tickX.map((x) => <path key={x} d={`M${x}.5 102v4`} />)}
    </g>
    <rect x="59.500" y="42.500" width="683" height="59" fill="none" stroke="#444" />
    {yTicks.map((label, i) => <text key={label} x="31" y={45 + i * 15}>{label}</text>)}
    {xTicks.map((label, i) => <text key={label} x={tickX[i]} y="114" textAnchor="middle">{label}</text>)}
    {bars.map((h, i) => {
      const x = 93 + Math.round(i * 68.3);
      return (
        <g key={x}>
          <path d={`M${x - 8} 101H${x + 8}`} stroke="#1c2c3c" strokeWidth="1.500" />
          {i > 1 && <path d={`M${x + 3} 100.500h5`} stroke="#3a78b8" />}
          {h > 0 && (
            <rect
              x={x - 4}
              y={101 - h}
              width="5"
              height={h}
              fill={i === 9 ? '#ee18e0' : '#2a14b4'}
              stroke="#1a1040"
              strokeWidth=".6"
            />
          )}
        </g>
      );
    })}
    <ChartTitle x="400" y="129" textAnchor="middle">Element Metrics</ChartTitle>
  </ChartSvg>
);

const BottomTabs = styled.div`
  display: flex;
  flex: none;
  height: 14px;
  border-top: 1px solid #ddd;
  background: #f7f7f7;
`;

const BottomTab = styled.button`
  height: 13px;
  padding: 0 ${({ $active }) => ($active ? 4 : 0)}px 0 1px;
  border: solid #bbb;
  border-width: 0 ${({ $active }) => ($active ? 1 : 0)}px 1px 0;
  background: ${({ $active }) => ($active ? '#fff' : '#f7f7f7')};
  font-weight: ${({ $active }) => ($active ? 700 : 400)};
`;

const TabSlope = ({ width, fill, stroke }) => (
  <svg width={width} height="13" viewBox={`0 0 ${width} 13`}>
    <path d={`M0 0L${width - 3} 12.500H${width}V0Z`} fill={fill} />
    <path d={`M0 0L${width - 3} 12.500H${width}`} fill="none" stroke={stroke} />
  </svg>
);

/* ---------- status bar ---------- */

const StatusBar = styled.footer`
  display: flex;
  flex: none;
  height: 12px;
  margin-top: 2px;
  border-top: 1px solid #ccc;
  font: 8px/10px ${titleFont};
  white-space: nowrap;
`;

const StatusCell = styled.div`
  display: flex;
  flex: ${({ $share }) => $share} 0 0;
  align-items: center;
  gap: ${({ $gap }) => $gap || 2}px;
  padding-left: 2px;
  border-left: 1px solid #b0b0b0;
`;

const Tool = ({ icon, label, caret, tight, disabled, end, narrow }) => (
  <ToolButton type="button" disabled={disabled} $end={end} aria-label={label ? undefined : icon}>
    {icon && <IconSlot $narrow={narrow}><Icon name={icon} /></IconSlot>}
    {label}
    {caret && <Caret $gap={label ? 4 : 0} $tight={tight} $muted={disabled} />}
  </ToolButton>
);

const App = () => {
  const [tab, setTab] = useState('Geometry');
  const [bottomTab, setBottomTab] = useState('Mesh Metrics');

  return (
    <Shell>
      <GlobalStyle />
      <TitleBar>
        <Icon name="logo" />
        <AppTitle>Multiple Systems - Mechanical [ANSYS Academic Research]</AppTitle>
        <WindowButton aria-label="Minimize"><Icon name="minBox" size={8} /></WindowButton>
        <WindowButton aria-label="Restore"><Icon name="restore" size={8} /></WindowButton>
        <WindowButton aria-label="Close"><Icon name="closeBox" size={8} /></WindowButton>
      </TitleBar>
      <RemoteBar>
        <RemoteButton aria-label="Pin"><Icon name="pinSide" size={10} /></RemoteButton>
        <RemoteAddress>147.229.135.165</RemoteAddress>
        <RemoteButton aria-label="Minimize"><Icon name="minimize" size={8} /></RemoteButton>
        <RemoteButton aria-label="Restore"><Icon name="restore" size={8} /></RemoteButton>
        <RemoteButton aria-label="Close"><Icon name="closeLight" size={8} /></RemoteButton>
      </RemoteBar>

      <Toolbar $tall $inset={5}>
        {['File', 'Edit', 'View', 'Units', 'Tools', 'Help'].map((item) => <MenuButton key={item}>{item}</MenuButton>)}
        <Grip $before={6} />
        <Tool icon="check" />
        <Tool icon="link" />
        <Divider $space={3} />
        <Tool icon="bolt" label="Solve" caret disabled narrow end={2} />
        <Tool icon="help" label="Show Errors" disabled narrow end={4} />
        <Tool icon="addBlue" />
        <Tool icon="addYellow" />
        <Tool icon="pageGray" disabled />
        <Tool icon="spade" disabled />
        <Tool icon="pageGray" disabled />
        <Tool icon="palette" caret />
        <Tool icon="worksheet" label="Worksheet" narrow end={6} />
        <Tool icon="infoCursor" />
      </Toolbar>

      <Toolbar $tall>
        <Tool icon="labelA" />
        <Tool icon="probeGray" disabled />
        <Tool icon="coords" />
        <Tool icon="selBody" caret />
        <Tool icon="pick" caret tight narrow />
        {['selVertex', 'selEdge', 'selFace', 'selSolid'].map((name) => <Tool key={name} icon={name} />)}
        <Divider $space={3} />
        <Tool icon="viewCube" caret end={3} />
        {['rotate', 'pan', 'zoom', 'zoomIn'].map((name) => <Tool key={name} icon={name} />)}
        <Divider $space={3} />
        {['zoomFit', 'zoomBox', 'zoomPrev', 'zoomNextGray', 'iso', 'lookGray', 'eyeBox', 'printer', 'tag'].map((name) => (
          <Tool key={name} icon={name} />
        ))}
        <Divider $space={3} />
        <Tool icon="windowPane" caret />
      </Toolbar>

      <Toolbar>
        <Tool icon="vertices" label="Show Vertices" end={5} narrow />
        <Tool icon="wireframe" label="Wireframe" end={4} narrow />
        <Divider />
        <Tool icon="showMeshGray" label="Show Mesh" disabled end={4} narrow />
        <Tool icon="triad" />
        <Tool icon="colors" label="Random Colors" end={4} />
        <Tool icon="annotate" label="Annotation Preferences" end={2} />
        <Divider />
        <Tool icon="axisGray" disabled />
        <Tool icon="axisGray" disabled />
        <Tool icon="axisGray" disabled />
        <Spacer />
        <Explode>
          <Grip />
          <Tool icon="explodeGray" disabled narrow />
          <Tool icon="resetGray" label="Reset" disabled />
          <ExplodeLabel htmlFor="explode">Explode Factor:</ExplodeLabel>
          <ExplodeRange id="explode" type="range" defaultValue="0" />
          <AssemblySelect aria-label="Assembly"><option>Assembly Center</option></AssemblySelect>
        </Explode>
      </Toolbar>

      <Toolbar>
        <Tool icon="edgeColor" label="Edge Coloring" caret narrow />
        {['edge0', 'edge1', 'edge2', 'edge3', 'edgeX'].map((name) => <Tool key={name} icon={name} caret narrow />)}
        <Tool icon="arrowBlack" />
        <Tool icon="thickRed" />
        <Tool icon="thickGreen" label="Thicken Annotations" />
      </Toolbar>

      <Toolbar $tall>
        <Tool label="Mesh" end={4} />
        <Tool icon="bolt" label="Update" disabled narrow />
        <Divider />
        <Tool icon="mesh" label="Mesh" caret narrow />
        <Tool icon="meshControl" label="Mesh Control" caret narrow />
        <Tool icon="mesh" label="Mesh Edit" caret narrow />
        <Divider $space={3} />
        <Tool icon="graphGray" label="Metric Graph" disabled narrow />
        <Divider $space={3} />
        <Tool icon="badgeGray" label="Probe" disabled narrow end={2} />
        <Divider $space={3} />
        <Tool icon="badgeGray" disabled />
        <Tool icon="badgeGray" disabled />
        <Divider $space={2} />
        <Tool icon="sphereGray" caret disabled />
      </Toolbar>

      <Main>
        <SideColumn>
          <Panel $grow>
            <PanelHeader>
              <PanelTitle>Outline</PanelTitle>
              <PanelButton aria-label="Pin outline"><Icon name="pin" size={8} /></PanelButton>
            </PanelHeader>
            <FilterRow>
              <FilterLabel htmlFor="filter">Filter:</FilterLabel>
              <FilterSelect id="filter"><option>Name</option></FilterSelect>
              <FilterInput aria-label="Filter text" />
              <FilterButton aria-label="Refresh"><Icon name="refresh" size={10} /></FilterButton>
              <FilterButton aria-label="Clear"><Icon name="filterGray" size={10} /></FilterButton>
              <FilterButton aria-label="Expand"><Icon name="expand" size={10} /></FilterButton>
            </FilterRow>
            <PanelBody>
              <Tree>
                {outline.map(({ label, icon, level, open, bold, status }) => (
                  <TreeItem key={label} $level={level} $bold={bold}>
                    {open === undefined ? <ToggleGap /> : <Toggle $open={open} aria-label={label} />}
                    <TreeIcons>
                      <Icon name={status || 'done'} size={9} />
                      <Icon name={icon} size={11} />
                    </TreeIcons>
                    {label}
                  </TreeItem>
                ))}
              </Tree>
              <Scroll before={17} thumb={78} after={97} />
            </PanelBody>
          </Panel>

          <DetailsPanel>
            <PanelHeader>
              <PanelTitle>Details of &quot;Mesh&quot;</PanelTitle>
              <PanelButton aria-label="Pin details"><Icon name="pin" size={8} /></PanelButton>
            </PanelHeader>
            <PanelBody>
              <DetailsTable>
                <colgroup>
                  <col width="9" />
                  <col width="68" />
                  <col />
                </colgroup>
                <tbody>
                  {details.map(({ name, value, group, open }) => (
                    <tr key={name || group}>
                      <GutterCell>{group && <Toggle $open={open} aria-label={group} />}</GutterCell>
                      {group
                        ? <GroupCell colSpan={2}>{group}</GroupCell>
                        : (
                          <>
                            <DetailsCell>{name}</DetailsCell>
                            <DetailsCell $filled>{value}</DetailsCell>
                          </>
                        )}
                    </tr>
                  ))}
                </tbody>
              </DetailsTable>
              <Scroll before={34} thumb={124} after={1} />
            </PanelBody>
          </DetailsPanel>
        </SideColumn>

        <WorkColumn>
          <Viewport>
            <Model />
            <Target width="36" height="36" viewBox="0 0 36 36" fill="none" stroke="#84306e" strokeWidth=".9">
              <circle cx="18" cy="18" r="16.500" />
              <circle cx="18" cy="18" r="8.500" />
              <path d="M8 18.500h20M18.500 8v20" />
            </Target>
            <Brand>
              <BrandName>ANSYS</BrandName>
              <BrandRelease>R16.2</BrandRelease>
              <BrandEdition>Academic</BrandEdition>
            </Brand>
            <Triad width="64" height="64" viewBox="0 0 64 64" fontFamily="Liberation Sans, sans-serif" fontSize="8">
              <path d="M12 14H37" stroke="#0c7a1a" strokeWidth="3" />
              <path d="M34 10v8l11-4z" fill="#0c7a1a" />
              <path d="M9 14V45" stroke="#a01018" strokeWidth="3" />
              <path d="M5 44h8L9 55z" fill="#8c0c14" />
              <circle cx="12" cy="13" r="4" fill="#10109a" />
              <circle cx="30" cy="32" r="4" fill="#18b0b0" stroke="#0c7878" strokeWidth=".6" />
              <text x="14" y="12" fill="#3040e0">Z</text>
              <text x="54" y="14" fill="#28a040">Y</text>
              <text x="8" y="61" fill="#f05050">X</text>
            </Triad>
          </Viewport>
          <ViewTabs>
            <Slant back />
            <ViewTab $active={tab === 'Geometry'} onClick={() => setTab('Geometry')}>Geometry</ViewTab>
            <Slant />
            <ViewTab $active={tab === 'Print'} onClick={() => setTab('Print')}>Print Preview</ViewTab>
            <Slant back />
            <ViewTab $active={tab === 'Report'} onClick={() => setTab('Report')}>Report Preview</ViewTab>
            <Slant />
          </ViewTabs>

          <MetricsPanel>
            <PanelHeader>
              <PanelTitle>Mesh Metrics</PanelTitle>
              <PanelButton aria-label="Pin metrics"><Icon name="pin" size={8} /></PanelButton>
              <PanelButton aria-label="Close metrics"><Icon name="close" size={7} /></PanelButton>
            </PanelHeader>
            <PanelBody>
              <MetricsContent>
                <ControlsButton>Controls</ControlsButton>
                <Chart />
              </MetricsContent>
              <Scroll before={1} thumb={128} after={12} />
            </PanelBody>
          </MetricsPanel>
          <BottomTabs>
            <TabSlope width={15} fill="#f7f7f7" stroke="#bbb" />
            <BottomTab $active={bottomTab === 'Messages'} onClick={() => setBottomTab('Messages')}>Messages</BottomTab>
            <TabSlope width={8} fill="#fff" stroke="#d89a9a" />
            <BottomTab $active={bottomTab === 'Mesh Metrics'} onClick={() => setBottomTab('Mesh Metrics')}>
              Mesh Metrics
            </BottomTab>
          </BottomTabs>
        </WorkColumn>
      </Main>

      <StatusBar>
        <StatusCell $share={278} />
        <StatusCell $share={132} />
        <StatusCell $share={112}>
          <Icon name="info" size={10} />
          1 Message
        </StatusCell>
        <StatusCell $share={246}>No Selection</StatusCell>
        <StatusCell $share={233} $gap={8}>
          <span>Metric (m, kg, N, s, V, A)</span>
          <span>Degrees</span>
          <span>rad/s</span>
          <span>Celsius</span>
        </StatusCell>
        <StatusCell $share={22} />
      </StatusBar>
    </Shell>
  );
};

export default App;
